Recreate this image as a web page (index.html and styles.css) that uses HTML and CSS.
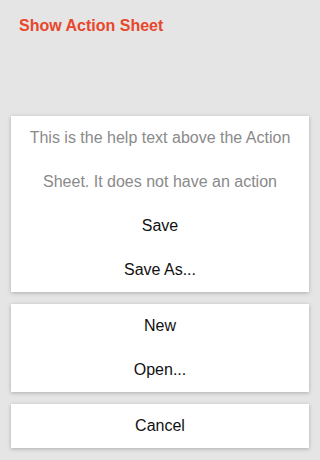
FILE: index.html
```html
<!DOCTYPE html>
<html lang="en">
<head>
    <meta charset="UTF-8">
    <meta name="viewport" content="width=device-width, initial-scale=1.0">
    <title>Action Sheet</title>
    <link rel="stylesheet" href="styles.css">
</head>
<body>

    <div class="header">
        <a class="show-button" href="#">Show Action Sheet</a>
    </div>

    <div class="action-sheet">
        <div class="group">
            <div class="help-text">This is the help text above the Action</div>
            <div class="help-text">Sheet. It does not have an action</div>
            <div class="item">Save</div>
            <div class="item">Save As...</div>
        </div>
        <div class="group">
            <div class="item">New</div>
            <div class="item">Open...</div>
        </div>
        <div class="group">
            <div class="item">Cancel</div>
        </div>
    </div>

</body>
</html>
```

FILE: styles.css
```css
* {
    margin: 0;
    padding: 0;
    box-sizing: border-box;
    font-family: Arial, "Liberation Sans", sans-serif;
}

body {
    display: flex;
    flex-direction: column;
    height: 100vh;
    background: #e5e5e5;
}

.header {
    padding: 17px 19px;
}

.show-button {
    color: #e8472b;
    font-size: 16px;
    font-weight: bold;
    line-height: 18px;
    text-decoration: none;
}

.action-sheet {
    margin-top: auto;
    display: flex;
    flex-direction: column;
    gap: 12px;
    padding: 0 11px 12px;
}

.group {
    background: #fff;
    box-shadow: 0 1px 4px rgba(0, 0, 0, 0.25);
}

.help-text,
.item {
    height: 44px;
    display: flex;
    align-items: center;
    justify-content: center;
    font-size: 16px;
}

.help-text {
    color: #8a8a8a;
}

.item {
    color: #111;
    cursor: pointer;
}
```
